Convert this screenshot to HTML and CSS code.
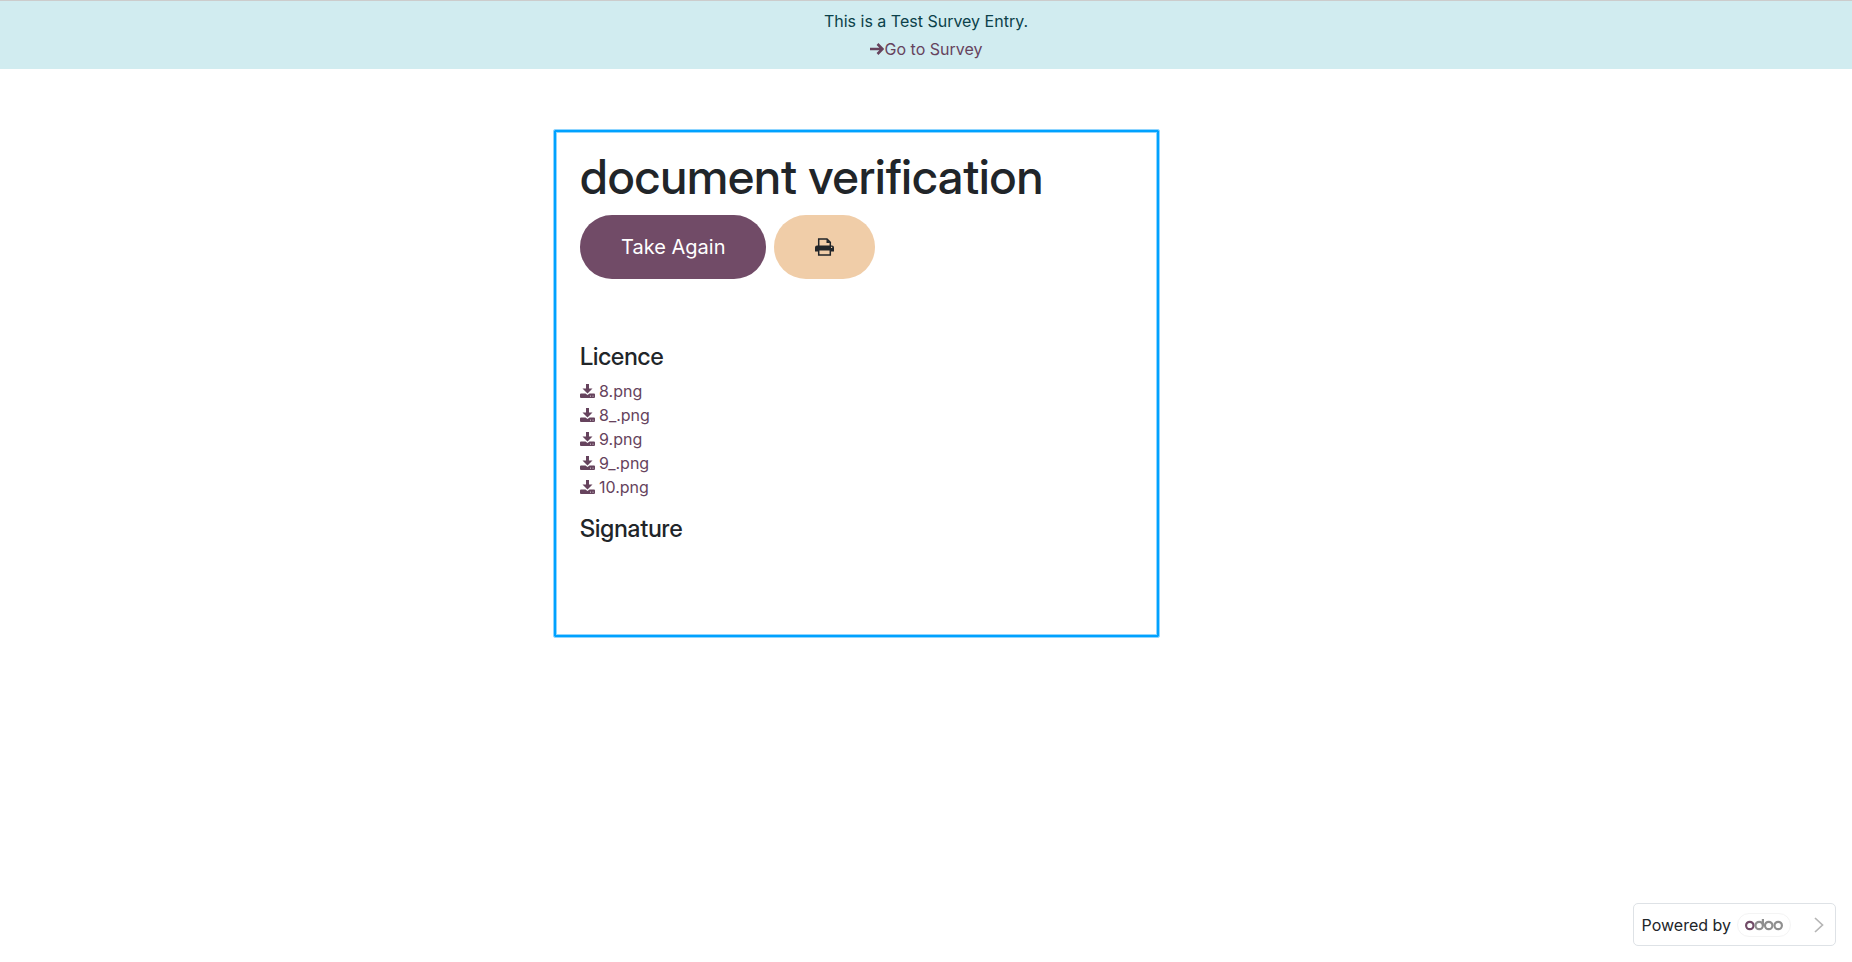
FILE: index.html
```html
<!DOCTYPE html>
<html lang="en">
<head>
  <meta charset="UTF-8">
  <title>document verification</title>
  <link rel="stylesheet" href="styles.css">
</head>
<body>
  <svg class="sprite" width="0" height="0">
    <symbol id="download" viewBox="0 0 15 14">
      <path fill-rule="evenodd" d="M6 0h3v4.500h3.500L7.500 9.500 2.500 4.500H6zM1 9.500h4.500l2 1.500 2-1.500H14a1 1 0 0 1 1 1V13a1 1 0 0 1-1 1H1a1 1 0 0 1-1-1v-2.500a1 1 0 0 1 1-1zm9 2.300v.8h1v-.8zm2.500 0v.8h1v-.8z"/>
    </symbol>
  </svg>

  <div class="alert">
    <p>This is a Test Survey Entry.</p>
    <a href="#"><svg class="arrow" viewBox="0 0 14 12"><path d="M0 6h12M7.500 1l5 5-5 5" fill="none" stroke="currentColor" stroke-width="2.600"/></svg>Go to Survey</a>
  </div>

  <main>
    <div class="results">
      <h1>document verification</h1>
      <div class="actions">
        <a class="btn btn-primary" href="#">Take Again</a>
        <button class="btn btn-print" type="button" aria-label="Print">
          <svg class="printer" viewBox="0 0 19 18">
            <path d="M3.700 8V1h8.300l3.300 3.300V8" fill="none" stroke="currentColor" stroke-width="1.500"/>
            <path d="M11.500 1v4h4z"/>
            <path fill-rule="evenodd" d="M2 7.500h15a2 2 0 0 1 2 2v4h-3V12.500H3v1H0v-4a2 2 0 0 1 2-2zm14 1.200v1.200h1.200V8.700z"/>
            <path d="M3.700 12v5h11.600v-5" fill="none" stroke="currentColor" stroke-width="1.500"/>
          </svg>
        </button>
      </div>

      <h2>Licence</h2>
      <ul class="files">
        <li><a href="#"><svg class="icon"><use href="#download"/></svg>8.png</a></li>
        <li><a href="#"><svg class="icon"><use href="#download"/></svg>8_.png</a></li>
        <li><a href="#"><svg class="icon"><use href="#download"/></svg>9.png</a></li>
        <li><a href="#"><svg class="icon"><use href="#download"/></svg>9_.png</a></li>
        <li><a href="#"><svg class="icon"><use href="#download"/></svg>10.png</a></li>
      </ul>

      <h2>Signature</h2>
    </div>
  </main>

  <footer>
    <div class="powered">
      <span>Powered by</span>
      <a class="brand" href="#" aria-label="odoo">
        <svg class="logo" viewBox="0 0 38 13">
          <g fill="none" stroke="#8f8f8f" stroke-width="2.200">
            <circle cx="4.800" cy="7.500" r="3.700" stroke="#714b67"/>
            <circle cx="14.200" cy="7.500" r="3.700"/>
            <path d="M17.900 7.500V1"/>
            <circle cx="23.700" cy="7.500" r="3.700"/>
            <circle cx="33.200" cy="7.500" r="3.700"/>
          </g>
        </svg>
      </a>
      <button class="next" type="button" aria-label="Next">
        <svg class="chevron" viewBox="0 0 10 16"><path d="M1 1l7.500 7L1 15" fill="none" stroke="#b5b5b5" stroke-width="1.700"/></svg>
      </button>
    </div>
  </footer>
</body>
</html>
```

FILE: styles.css
```css
* {
  box-sizing: border-box;
}
body {
  margin: 0;
  min-height: 100vh;
  display: flex;
  flex-direction: column;
  font-family: Inter, sans-serif;
  font-size: 16px;
  line-height: 24px;
  color: #212529;
  background: #fff;
}
svg {
  fill: currentColor;
}
.sprite {
  position: absolute;
}
a {
  color: #66435d;
  text-decoration: none;
}
.alert {
  padding: 8px 16px;
  border-top: 1px solid #cccccc;
  background: #d1ecf0;
  color: #0b414a;
  text-align: center;
}
.alert p {
  margin: 0 0 4px;
}
.alert a {
  display: inline-flex;
  align-items: center;
}
.arrow {
  width: 14px;
  height: 12px;
  margin-right: 1px;
}
main {
  flex: 1;
  width: 100%;
  max-width: 744px;
  margin: 0 auto;
  padding-top: 61px;
}
.results {
  max-width: 605px;
  padding: 16px 24px 84px;
  border: 2px solid #00a2ff;
  border-radius: 1px;
  outline: 1px solid #8fd5ff;
  box-shadow: inset 0 0 0 1px #8fd5ff;
}
h1, h2 {
  margin: 0;
  font-family: "Inter Display", Inter, sans-serif;
  font-weight: 500;
}
h1 {
  margin-bottom: 9px;
  font-size: 48px;
  line-height: 58px;
}
h2 {
  margin-bottom: 8px;
  font-size: 24px;
  line-height: 28px;
}
.actions {
  display: flex;
  gap: 8px;
  margin-bottom: 64px;
}
.btn {
  display: flex;
  align-items: center;
  height: 64px;
  padding: 0 41px;
  border: 0;
  border-radius: 32px;
  font-size: 20px;
}
.btn-primary {
  background: #714b67;
  color: #fff;
}
.btn-print {
  background: #f0cda8;
  color: #212529;
}
.printer {
  width: 19px;
  height: 18px;
}
.files {
  margin: 0 0 16px;
  padding: 0;
  list-style: none;
}
.files a {
  display: flex;
  align-items: center;
  gap: 4px;
}
.icon {
  width: 15px;
  height: 14px;
}
footer {
  display: flex;
  justify-content: flex-end;
  padding: 16px;
}
.powered {
  display: flex;
  align-items: center;
  height: 43px;
  padding: 0 8px;
  border: 1px solid #dee2e6;
  border-radius: 5px;
}
.brand {
  display: flex;
  align-items: center;
  height: 24px;
  margin: 0 20px 0 6px;
  padding: 0 7px;
  border: 1px solid #f4f4f4;
  border-radius: 12px;
}
.logo {
  width: 38px;
  height: 13px;
}
.next {
  display: flex;
  padding: 4px 3px;
  border: 0;
  background: none;
}
.chevron {
  width: 10px;
  height: 16px;
}
```
